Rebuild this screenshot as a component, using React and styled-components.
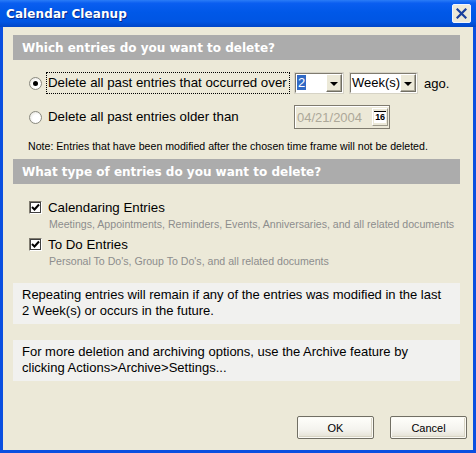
import React from 'react';
import styled, { createGlobalStyle } from 'styled-components';

const BG = '#ECE9D8';
const XP_BLUE = '#0A4FE0';

const GlobalStyle = createGlobalStyle`
  html, body {
    margin: 0;
    padding: 0;
    background: ${BG};
  }
  body {
    font-family: "Liberation Sans", Arial, sans-serif;
  }
`;

const Window = styled.div`
  width: 476px;
  height: 453px;
  box-sizing: border-box;
  display: flex;
  flex-direction: column;
  background: ${XP_BLUE};
  overflow: hidden;
`;

const TitleBar = styled.div`
  height: 27px;
  flex: none;
  display: flex;
  align-items: center;
  padding: 0 6px 0 6px;
  background: linear-gradient(
    to bottom,
    #2a7cf7 0%,
    #0a5ef0 12%,
    #0058e8 45%,
    #0055e3 80%,
    #0046c8 100%
  );
`;

const Title = styled.div`
  flex: 1;
  color: #fff;
  font-family: "DejaVu Sans", Verdana, sans-serif;
  font-weight: bold;
  font-size: 12px;
  letter-spacing: 0.1px;
  text-shadow: 1px 1px 0 #0a2a8a;
`;

const CloseButton = styled.div`
  width: 19px;
  height: 19px;
  box-sizing: border-box;
  border: 1px solid #f0f4ff;
  border-radius: 2px;
  background: #ece8d8;
  display: flex;
  align-items: center;
  justify-content: center;
  margin-right: -1px;
  margin-top: -1px;
`;

const Body = styled.div`
  flex: 1;
  margin: 0 3px 3px 3px;
  background: ${BG};
  display: flex;
  flex-direction: column;
  padding: 8px 13px 11px 10px;
`;

const SectionHeader = styled.div`
  height: 25px;
  flex: none;
  background: #acacac;
  color: #fff;
  font-family: "DejaVu Sans", Verdana, sans-serif;
  font-weight: bold;
  font-size: 12px;
  display: flex;
  align-items: center;
  padding-left: 9px;
  margin-top: ${(p) => p.$top || 0}px;
`;

const OptionRow = styled.div`
  display: flex;
  align-items: center;
  height: ${(p) => p.$h}px;
  margin-top: ${(p) => p.$top}px;
  padding-left: 16px;
  font-size: 13px;
  color: #000;
`;

const Radio = styled.span`
  width: 13px;
  height: 13px;
  box-sizing: border-box;
  border-radius: 50%;
  border: 1px solid #8a8a80;
  background: radial-gradient(circle at 60% 60%, #ffffff 40%, #dcdad0 100%);
  display: flex;
  align-items: center;
  justify-content: center;
  flex: none;
  &::after {
    content: '';
    width: 5px;
    height: 5px;
    border-radius: 50%;
    background: ${(p) => (p.$checked ? '#000' : 'transparent')};
  }
`;

const OptionLabel = styled.span`
  width: 244px;
  margin-left: 4px;
  margin-right: 4px;
  box-sizing: border-box;
  padding: 2px 1px 2px 1px;
  border: 1px dotted ${(p) => (p.$focus ? '#000' : 'transparent')};
  white-space: nowrap;
  line-height: 16px;
  font-size: 13.3px;
`;

const Combo = styled.div`
  width: ${(p) => p.$w}px;
  height: 22px;
  box-sizing: border-box;
  border: 2px solid;
  border-color: #7f7b6f #fff #fff #7f7b6f;
  outline: 1px solid #d6d3c6;
  outline-offset: -1px;
  background: #fff;
  display: flex;
  align-items: center;
  margin-right: 5px;
`;

const ComboText = styled.span`
  flex: 1;
  padding-left: 1px;
  font-size: 13px;
  line-height: 16px;
  & > em {
    font-style: normal;
    background: #316ac5;
    color: #fff;
    padding: 0 1px;
  }
`;

const ComboArrow = styled.span`
  width: 16px;
  height: 18px;
  flex: none;
  box-sizing: border-box;
  background: ${BG};
  border: 1px solid;
  border-color: #fff #716f64 #716f64 #fff;
  box-shadow: inset -1px -1px 0 #aca899;
  display: flex;
  align-items: center;
  justify-content: center;
  &::after {
    content: '';
    border-left: 4px solid transparent;
    border-right: 4px solid transparent;
    border-top: 4px solid #000;
    margin-top: 1px;
  }
`;

const Ago = styled.span`
  font-size: 13px;
  margin-left: 1px;
`;

const DateField = styled.div`
  width: 96px;
  height: 24px;
  box-sizing: border-box;
  border: 1px solid #7f7b6f;
  box-shadow: inset 1px 1px 0 #fff;
  display: flex;
  align-items: center;
  padding: 0 1px 0 2px;
  color: #aca899;
  font-size: 13px;
`;

const DateText = styled.span`
  flex: 1;
`;

const CalButton = styled.span`
  width: 16px;
  height: 18px;
  box-sizing: border-box;
  border: 1px solid;
  border-color: #fff #9d9a8c #9d9a8c #fff;
  background: ${BG};
  display: flex;
  align-items: center;
  justify-content: center;
`;

const CalIcon = styled.span`
  width: 12px;
  height: 12px;
  box-sizing: border-box;
  border-top: 1px solid #000;
  background: #fff;
  color: #000;
  font-size: 9px;
  font-weight: bold;
  line-height: 11px;
  text-align: center;
  letter-spacing: -0.3px;
  font-family: "Liberation Sans", Arial, sans-serif;
`;

const Note = styled.div`
  font-size: 10.6px;
  color: #000;
  margin: 11px 0 0 15px;
  line-height: 13px;
  white-space: nowrap;
`;

const CheckGroup = styled.div`
  margin-top: ${(p) => p.$top}px;
  padding-left: 16px;
`;

const CheckRow = styled.div`
  display: flex;
  align-items: center;
  height: 16px;
  font-size: 13.3px;
  color: #000;
`;

const CheckBox = styled.span`
  width: 13px;
  height: 13px;
  box-sizing: border-box;
  border: 1px solid;
  border-color: #7f7b6f #fff #fff #7f7b6f;
  outline: 1px solid #404040;
  outline-offset: -2px;
  background: #fff;
  display: flex;
  align-items: center;
  justify-content: center;
  flex: none;
  margin-right: 6px;
`;

const SubText = styled.div`
  font-size: 10.6px;
  color: #8d8d8d;
  margin-left: 20px;
  margin-top: 3px;
  line-height: 13px;
  white-space: nowrap;
`;

const InfoBox = styled.div`
  background: #f1f1ef;
  font-size: 13px;
  line-height: 16px;
  color: #000;
  padding: 4px 9px 5px 9px;
  height: 41px;
  box-sizing: border-box;
  margin-top: ${(p) => p.$top}px;
  white-space: nowrap;
`;

const ButtonBar = styled.div`
  margin-top: auto;
  display: flex;
  justify-content: flex-end;
  gap: 16px;
  margin-right: -7px;
`;

const Button = styled.button`
  width: 77px;
  height: 23px;
  box-sizing: border-box;
  border: 1px solid #716f64;
  border-radius: 2px;
  background: linear-gradient(to bottom, #fffffb 0%, #f4f3ee 60%, #e3e0d2 100%);
  box-shadow: inset 0 0 0 1px #fbfaf4, inset -1px -1px 0 1px #d8d4c4;
  font-family: "Liberation Sans", Arial, sans-serif;
  font-size: 11px;
  color: #000;
  padding: 0;
`;

const Check = () => (
  <svg width="9" height="9" viewBox="0 0 9 9">
    <path d="M1 4 L3.5 6.5 L8 1.5" stroke="#000" strokeWidth="2" fill="none" />
  </svg>
);

export default function App() {
  return (
    <>
      <GlobalStyle />
      <Window>
        <TitleBar>
          <Title>Calendar Cleanup</Title>
          <CloseButton>
            <svg width="11" height="11" viewBox="0 0 11 11">
              <path d="M1.5 1.5 L9.5 9.5 M9.5 1.5 L1.5 9.5" stroke="#1a3f9c" strokeWidth="2.2" strokeLinecap="square" />
            </svg>
          </CloseButton>
        </TitleBar>
        <Body>
          <SectionHeader>Which entries do you want to delete?</SectionHeader>

          <OptionRow $top={12} $h={22}>
            <Radio $checked />
            <OptionLabel $focus>Delete all past entries that occurred over</OptionLabel>
            <Combo $w={50}>
              <ComboText><em>2</em></ComboText>
              <ComboArrow />
            </Combo>
            <Combo $w={69}>
              <ComboText>Week(s)</ComboText>
              <ComboArrow />
            </Combo>
            <Ago>ago.</Ago>
          </OptionRow>

          <OptionRow $top={11} $h={24}>
            <Radio />
            <OptionLabel>Delete all past entries older than</OptionLabel>
            <DateField>
              <DateText>04/21/2004</DateText>
              <CalButton>
                <CalIcon>16</CalIcon>
              </CalButton>
            </DateField>
          </OptionRow>

          <Note>Note: Entries that have been modified after the chosen time frame will not be deleted.</Note>

          <SectionHeader $top={6}>What type of entries do you want to delete?</SectionHeader>

          <CheckGroup $top={15}>
            <CheckRow>
              <CheckBox><Check /></CheckBox>
              Calendaring Entries
            </CheckRow>
            <SubText>Meetings, Appointments, Reminders, Events, Anniversaries, and all related documents</SubText>
          </CheckGroup>

          <CheckGroup $top={5}>
            <CheckRow>
              <CheckBox><Check /></CheckBox>
              To Do Entries
            </CheckRow>
            <SubText>Personal To Do's, Group To Do's, and all related documents</SubText>
          </CheckGroup>

          <InfoBox $top={15}>
            Repeating entries will remain if any of the entries was modified in the last
            <br />2 Week(s) or occurs in the future.
          </InfoBox>

          <InfoBox $top={16}>
            For more deletion and archiving options, use the Archive feature by
            <br />clicking Actions&gt;Archive&gt;Settings...
          </InfoBox>

          <ButtonBar>
            <Button>OK</Button>
            <Button>Cancel</Button>
          </ButtonBar>
        </Body>
      </Window>
    </>
  );
}
